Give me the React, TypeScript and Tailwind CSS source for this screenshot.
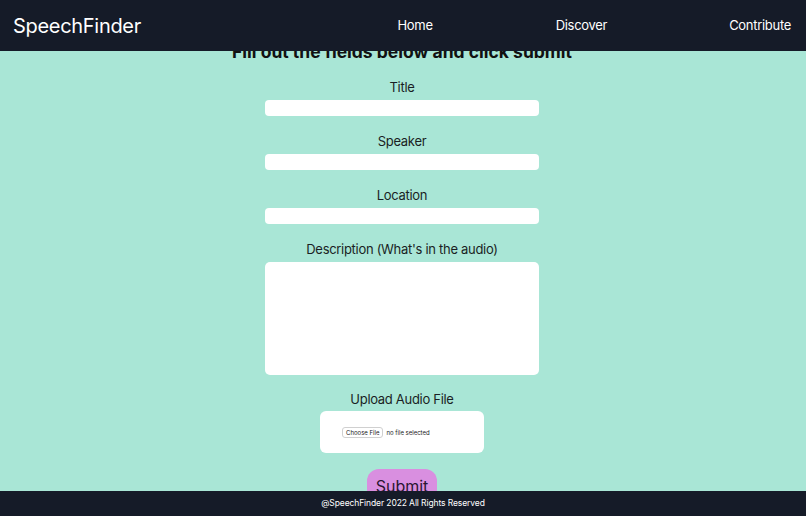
const fields = ['Title', 'Speaker', 'Location']

function Field({ label }: { label: string }) {
  return (
    <div className="flex flex-col items-center">
      <label className="text-[13px] leading-6 tracking-[-0.3px] text-[#1a1f24]">{label}</label>
      <input
        type="text"
        className="mt-[1px] h-4 w-[274px] rounded-[4px] bg-white outline-none"
      />
    </div>
  )
}

export default function App() {
  return (
    <div
      className="relative h-screen w-full overflow-hidden bg-[#a9e6d6]"
      style={{ fontFamily: 'Inter, "Noto Sans", sans-serif' }}
    >
      <header className="absolute inset-x-0 top-0 z-10 flex h-[51px] items-center bg-[#151b28] px-[13px] text-white">
        <div className="text-[20px] tracking-[-0.3px]">SpeechFinder</div>
        <nav className="ml-auto flex items-center text-[13px] tracking-[-0.3px]">
          <a className="mr-[123px]">Home</a>
          <a className="mr-[122px]">Discover</a>
          <a className="mr-[2px]">Contribute</a>
        </nav>
      </header>

      <main className="flex flex-col items-center pr-[2px] pt-[38px]">
        <h1 className="text-[17.5px] font-bold leading-7 text-[#111]">
          Fill out the fields below and click submit
        </h1>

        <div className="mt-[9px] flex flex-col items-center gap-[13px]">
          {fields.map((f) => (
            <Field key={f} label={f} />
          ))}
          <div className="flex flex-col items-center">
            <label className="text-[13px] leading-6 tracking-[-0.3px] text-[#1a1f24]">
              Description (What's in the audio)
            </label>
            <textarea className="mt-[1px] h-[113px] w-[274px] resize-none rounded-[5px] bg-white outline-none" />
          </div>
          <div className="flex flex-col items-center">
            <label className="text-[13px] leading-[23px] tracking-[-0.3px] text-[#1a1f24]">
              Upload Audio File
            </label>
            <div className="flex h-[42px] w-[164px] items-center rounded-[6px] bg-white pl-[22px]">
              <span className="rounded-[3px] border border-[#d0d0d0] bg-white px-[3px] text-[6px] leading-[9px] text-[#222]">
                Choose File
              </span>
              <span className="ml-[3px] text-[6px] text-[#222]">no file selected</span>
            </div>
          </div>
        </div>

        <button className="mt-4 h-[40px] w-[70px] rounded-[12px] bg-[#d98fe0] pb-[6px] text-[16px] text-[#2a1530]">
          Submit
        </button>
      </main>

      <footer className="absolute inset-x-0 bottom-0 z-10 flex h-[25px] items-center justify-center bg-[#151b28] text-[8.5px] tracking-[-0.1px] text-white">
        @SpeechFinder 2022 All Rights Reserved
      </footer>
    </div>
  )
}
